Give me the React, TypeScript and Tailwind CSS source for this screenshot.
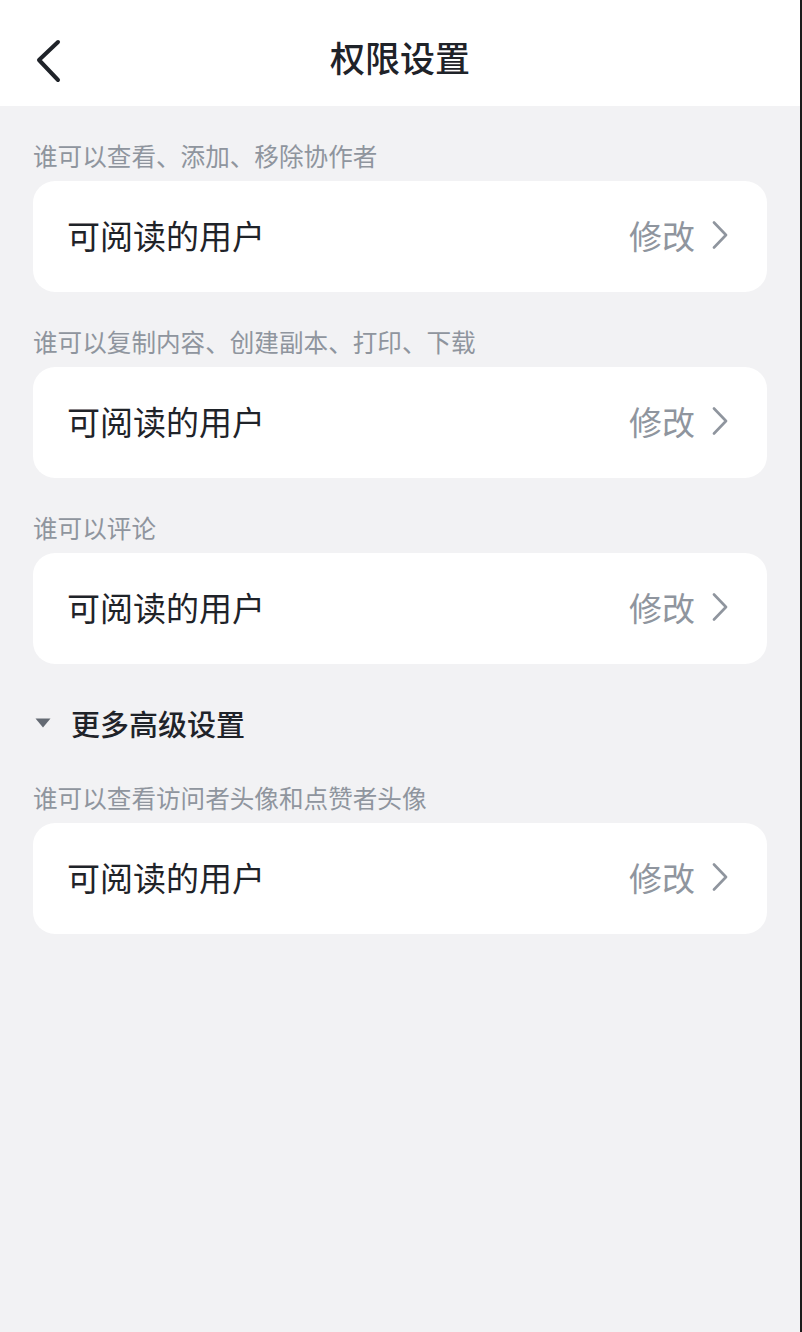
const font = '[font-family:"Noto_Sans_CJK_SC","Noto_Sans",sans-serif]';

const sections = [
  { label: '谁可以查看、添加、移除协作者', value: '可阅读的用户' },
  { label: '谁可以复制内容、创建副本、打印、下载', value: '可阅读的用户' },
  { label: '谁可以评论', value: '可阅读的用户' },
];

const advanced = [{ label: '谁可以查看访问者头像和点赞者头像', value: '可阅读的用户' }];

const SettingCard = ({ value }: { value: string }) => (
  <div className="flex h-[111px] items-center justify-between rounded-[22px] bg-white pl-[34px] pr-[39px] pb-[3px]">
    <span className="text-[33px] leading-none text-[#1f2329]">{value}</span>
    <div className="flex items-center gap-[17px]">
      <span className="text-[33px] leading-none text-[#8f959e]">修改</span>
      <svg width="16" height="28" viewBox="0 0 16 28" fill="none">
        <path d="M2 1.5 L14 14 L2 26.5" stroke="#8f959e" strokeWidth="2.6" strokeLinecap="round" strokeLinejoin="round" />
      </svg>
    </div>
  </div>
);

const Section = ({ label, value }: { label: string; value: string }) => (
  <div>
    <div className="pt-[32px] pb-[9px] text-[24.6px] leading-[34px] text-[#8f959e]">{label}</div>
    <SettingCard value={value} />
  </div>
);

export default function App() {
  return (
    <div className={`flex min-h-[1332px] w-full bg-[#f2f2f4] ${font}`}>
      <div className="flex-1">
        {/* Header */}
        <div className="relative flex h-[106px] items-center justify-center bg-white pt-[6px]">
          <button className="absolute left-[34px] top-[38px]">
            <svg width="30" height="46" viewBox="0 0 30 46" fill="none">
              <path d="M24 4 L5 22 L24 42" stroke="#1f2329" strokeWidth="4" strokeLinecap="round" strokeLinejoin="round" />
            </svg>
          </button>
          <h1 className="text-[35px] font-medium leading-none text-[#1f2329]">权限设置</h1>
        </div>

        <div className="pl-[33px] pr-[33px]">
          {sections.map((s) => (
            <Section key={s.label} label={s.label} value={s.value} />
          ))}

          {/* Advanced toggle */}
          <div className="flex items-center gap-[20px] pt-[42px] pb-[8px] pl-[2px] leading-[34px]">
            <svg width="16" height="10" viewBox="0 0 16 10">
              <path d="M0.5 0.5 H15.5 L8 9.5 Z" fill="#646a73" />
            </svg>
            <span className="text-[29px] font-medium text-[#1f2329]">更多高级设置</span>
          </div>

          {advanced.map((s) => (
            <Section key={s.label} label={s.label} value={s.value} />
          ))}
        </div>
      </div>
      <div className="w-[2px] bg-[#1a1a1a]" />
    </div>
  );
}
